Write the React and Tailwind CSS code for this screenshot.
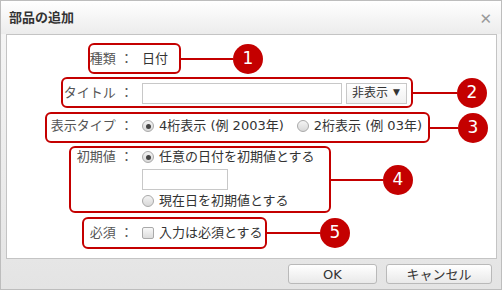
import React from 'react'

const font = { fontFamily: '"DejaVu Sans", "Noto Sans CJK JP", sans-serif' }

const Radio = ({ checked }) => (
  <span className="inline-flex items-center justify-center w-[12px] h-[12px] rounded-full border border-[#a9a9a9] bg-gradient-to-b from-[#f4f4f4] to-[#d8d8d8] mr-[5px]">
    {checked && <span className="w-[5px] h-[5px] rounded-full bg-[#444]" />}
  </span>
)

const Checkbox = () => (
  <span className="inline-block w-[12px] h-[12px] rounded-[2px] border border-[#a9a9a9] bg-gradient-to-b from-[#f8f8f8] to-[#dcdcdc] mr-[5px]" />
)

const Row = ({ label, className = 'h-[34px]', children }) => (
  <div className={`flex items-center ${className}`}>
    <div className="w-[126px] text-right text-[#555] whitespace-pre">{label}</div>
    <div className="ml-[9px] flex items-center text-[#333]">{children}</div>
  </div>
)

const Callout = ({ n, left, top, w, h, line }) => (
  <div className="absolute flex items-center" style={{ left, top }}>
    <div className="border-2 border-[#c40000] rounded-[6px]" style={{ width: w, height: h }} />
    <div className="h-[2px] bg-[#c40000]" style={{ width: line }} />
    <div className="w-[30px] h-[30px] rounded-full bg-[#c40000] text-white text-[17px] flex items-center justify-center">
      {n}
    </div>
  </div>
)

export default function App() {
  return (
    <div
      style={font}
      className="w-[502px] h-[290px] border border-[#bdbdbd] flex flex-col bg-gradient-to-b from-[#f7f7f7] to-[#e4e4e4] text-[13px] overflow-hidden"
    >
      <header className="h-[33px] flex items-center justify-between pl-[8px] pr-[9px] bg-gradient-to-b from-[#ffffff] to-[#ececec]">
        <span className="font-bold text-[#333] text-[13px]">部品の追加</span>
        <span className="text-[#9a9a9a] text-[15px] font-bold leading-none mt-[3px]">✕</span>
      </header>

      <section className="relative flex-1 ml-[5px] mr-[4px] bg-white border border-[#c4c4c4] pt-[7px]">
        <Row label="種類 ：">日付</Row>
        <Row label="タイトル ：">
          <span className="w-[200px] h-[21px] border border-[#c8c8c8] bg-white" />
          <span className="ml-[4px] w-[61px] h-[21px] border border-[#c8c8c8] bg-gradient-to-b from-white to-[#f1f1f1] flex items-center pl-[5px] text-[12px]">
            非表示<span className="ml-[5px] text-[9px]">▼</span>
          </span>
        </Row>
        <Row label="表示タイプ ：" className="h-[32px]">
          <Radio checked />
          <span>4桁表示 (例 2003年)</span>
          <span className="ml-[13px]" />
          <Radio />
          <span>2桁表示 (例 03年)</span>
        </Row>
        <Row label="初期値 ：" className="h-[22px] mt-[4px]">
          <Radio checked />
          <span>任意の日付を初期値とする</span>
        </Row>
        <div className="h-[21px] ml-[135px] mt-[1px] w-[86px] border border-[#c8c8c8]" />
        <Row label="" className="h-[22px]">
          <Radio />
          <span>現在日を初期値とする</span>
        </Row>
        <Row label="必須 ：" className="h-[34px] mt-[4px]">
          <Checkbox />
          <span>入力は必須とする</span>
        </Row>

        <Callout n="1" left={81} top={8} w={93} h={31} line={52} />
        <Callout n="2" left={54} top={42} w={352} h={31} line={44} />
        <Callout n="3" left={38} top={77} w={385} h={31} line={28} />
        <Callout n="4" left={62} top={111} w={262} h={67} line={52} />
        <Callout n="5" left={75} top={182} w={185} h={32} line={53} />
      </section>

      <footer className="h-[30px] flex items-center justify-end pr-[9px] gap-[9px]">
        <button className="w-[89px] h-[20px] border border-[#b9b9b9] rounded-[3px] bg-gradient-to-b from-white to-[#e9e9e9] text-[#333] text-[13px] leading-none">
          OK
        </button>
        <button className="w-[106px] h-[20px] border border-[#b9b9b9] rounded-[3px] bg-gradient-to-b from-white to-[#e9e9e9] text-[#333] text-[13px] leading-none">
          キャンセル
        </button>
      </footer>
    </div>
  )
}
